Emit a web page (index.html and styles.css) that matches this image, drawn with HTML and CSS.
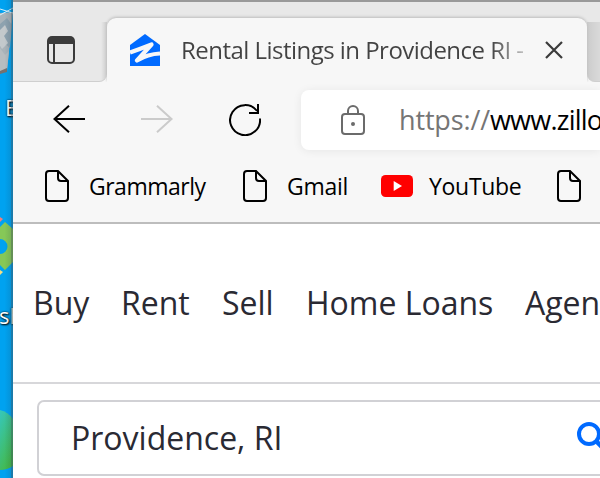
FILE: index.html
```html
<!DOCTYPE html>
<html lang="en">
<head>
<meta charset="utf-8">
<title>Rental Listings in Providence RI</title>
<link rel="stylesheet" href="styles.css">
</head>
<body>
<svg width="0" height="0" class="defs">
  <symbol id="page" viewBox="0 0 24 32"><path d="M4 1H13L23 11V28Q23 31 20 31H4Q1 31 1 28V4Q1 1 4 1ZM13 1V8Q13 11 16 11H23" fill="none" stroke="#000" stroke-width="2"/></symbol>
</svg>
<div class="screen">
  <aside class="desktop">
    <svg class="wallpaper" width="13" height="478" viewBox="0 0 13 478">
      <path d="M0 13L13 12L7 71L0 73Z" fill="#a9b3b9"/>
      <path d="M0 24L7 18L12 25L10 48L4 43L0 47Z" fill="#8da2af"/>
      <path d="M0 30L5 25L8 31L4 36L8 43L2 49L0 46Z" fill="#c3c9cc"/>
      <path d="M0 48L5 55L9 51L7 69L0 72Z" fill="#b7bdc0"/>
      <path d="M0 71L7 68V72L0 74Z" fill="#77716e"/>
      <path d="M0 9L13 13M0 15L13 8" stroke="#d9eff9" stroke-width="1"/>
      <path d="M0 227L5 222L13 229V262L5 270L0 265V254A7.500 7.500 0 0 0 0 239Z" fill="#86c857"/>
      <path d="M0 217L3 219L0 222Z" fill="#f47d7b"/>
      <path d="M0 270L3 272L0 275Z" fill="#f8df83"/>
      <path d="M0 410Q8 412 13 419V466Q7 470 0 470Z" fill="url(#orb)"/>
      <defs><linearGradient id="orb" x2=".5" y2="1"><stop stop-color="#36c7bd"/><stop offset="1" stop-color="#43b94c"/></linearGradient></defs>
    </svg>
    <span class="label label-top">E</span>
    <span class="label label-mid">sh</span>
  </aside>
  <main class="window">
    <header class="tabstrip">
      <div class="strip-cell strip-left"><div class="strip-fill">
        <svg width="28" height="28" viewBox="0 0 28 28"><rect x="1" y="1" width="26" height="26" rx="4" fill="none" stroke="#3b3b3b" stroke-width="2"/><path d="M1 8V4Q1 1 4 1H24Q27 1 27 4V8Z" fill="#3b3b3b"/><path d="M7 8V27" stroke="#3b3b3b" stroke-width="2"/></svg>
      </div></div>
      <div class="tab-cell"><div class="tab">
        <svg class="favicon" width="30" height="32" viewBox="0 0 30 32"><path d="M0 11L15 0L30 11V32H0Z" fill="#006aff"/><path d="M0 18.500Q10 15 21.500 10.500L7 26.500Q18 20 30 19.500" fill="none" stroke="#f7f7f7" stroke-width="4.200" stroke-linejoin="round"/></svg>
        <span class="tab-title">Rental Listings in Providence RI <i>-</i></span>
        <svg class="close" width="18" height="18" viewBox="0 0 18 18"><path d="M1 1L17 17M17 1L1 17" stroke="#3b3b3b" stroke-width="2.200"/></svg>
      </div></div>
      <div class="strip-cell strip-right"><div class="strip-fill"></div></div>
    </header>
    <section class="toolbar">
      <svg class="back" width="32" height="28" viewBox="0 0 32 28"><path d="M32 14H1.500M16 .8L1.500 14L16 27.200" fill="none" stroke="#000" stroke-width="2"/></svg>
      <svg class="forward" width="32" height="28" viewBox="0 0 32 28"><path d="M0 14H30.500M16 .8L30.500 14L16 27.200" fill="none" stroke="#cbcbcb" stroke-width="2"/></svg>
      <svg class="reload" width="32" height="32" viewBox="0 0 32 32"><path d="M31 14.500A15 15 0 1 1 28 7M29 0V9H20" fill="none" stroke="#000" stroke-width="2"/></svg>
      <div class="address">
        <svg width="24" height="30" viewBox="0 0 24 30"><rect x="1" y="9" width="22" height="20" rx="3" fill="none" stroke="#6b6b6b" stroke-width="2"/><path d="M7 9V6A5 5 0 0 1 17 6V9" fill="none" stroke="#6b6b6b" stroke-width="2"/><circle cx="12" cy="19" r="2" fill="#6b6b6b"/></svg>
        <span class="url"><span class="scheme">https://</span><span class="host">www.zillow.com</span></span>
      </div>
    </section>
    <nav class="bookmarks">
      <svg class="b1" width="24" height="32"><use href="#page"/></svg><span class="t1">Grammarly</span>
      <svg class="b2" width="24" height="32"><use href="#page"/></svg><span class="t2">Gmail</span>
      <svg class="b3" width="32" height="22" viewBox="0 0 32 22"><rect width="32" height="22" rx="4.500" fill="#f00"/><path d="M12.700 6L21 11L12.700 16Z" fill="#fff"/></svg><span class="t3">YouTube</span>
      <svg class="b4" width="24" height="32"><use href="#page"/></svg>
    </nav>
    <nav class="site-nav"><span class="n1">Buy</span><span class="n2">Rent</span><span class="n3">Sell</span><span class="n4">Home Loans</span><span class="n5">Agent finder</span></nav>
    <section class="search-row"><div class="search">
      <span>Providence, RI</span>
      <svg width="32" height="32" viewBox="0 0 32 32"><circle cx="12" cy="12" r="10" fill="none" stroke="#006aff" stroke-width="4"/><path d="M19 19L30 30" stroke="#006aff" stroke-width="4.500"/></svg>
    </div></section>
  </main>
</div>
</body>
</html>
```
FILE: styles.css
```css
* { box-sizing: border-box; }
body { margin: 0; font-family: "Open Sans", "Noto Sans", sans-serif; }
svg { display: block; flex: none; }
.defs { position: absolute; }
.screen { display: flex; width: 600px; height: 478px; overflow: hidden; }
.desktop { position: relative; width: 13px; flex: none; background: #00a2f0; overflow: hidden; }
.desktop::after { content: ""; position: absolute; inset: 0; background: linear-gradient(90deg, transparent 35%, rgba(35,55,75,.14) 84%, rgba(60,75,85,.45) 86%); }
.label { position: absolute; color: #fff; font-size: 22px; line-height: 28px; text-shadow: 1px 1px 2px #000, 0 0 2px #000; }
.label-top { left: 5px; top: 93px; }
.label-mid { left: -1px; top: 301px; }
.window { width: 587px; flex: none; overflow: hidden; background: #fff; }
.tabstrip { display: flex; height: 82px; border-top: 2px solid #999; background: #f7f7f7; }
.strip-left { width: 94px; }
.strip-right { width: 13px; }
.strip-fill { height: 80px; display: flex; align-items: center; padding: 16px 0 0 34px; background: #e8e8e8; border-bottom: 1px solid #cfcfcf; }
.strip-left .strip-fill { border-radius: 0 0 8px 0; background: linear-gradient(90deg, transparent 88px, rgba(0,0,0,.12)) 0 20px / 100% 60px no-repeat #e8e8e8; }
.strip-right .strip-fill { border-radius: 0 0 0 8px; background: linear-gradient(270deg, transparent 7px, rgba(0,0,0,.12)) 0 20px / 100% 60px no-repeat #e8e8e8; }
.tab-cell { width: 480px; padding-top: 16px; background: #e8e8e8; }
.tab { height: 64px; display: flex; align-items: center; background: #f7f7f7; border-radius: 9px 9px 0 0; box-shadow: 0 -1px 3px #bbb; clip-path: inset(-5px -3px 0); }
.favicon { margin-left: 23px; }
.tab-title { width: 345px; margin: 0 19px 0 21px; padding-bottom: 2px; font-size: 24px; letter-spacing: -.53px; white-space: nowrap; color: transparent; background: linear-gradient(90deg, #424242 310px, rgba(66,66,66,.2) 348px); -webkit-background-clip: text; background-clip: text; }
.tab-title i { font-style: normal; }
.toolbar { height: 75px; display: flex; align-items: center; background: #f7f7f7; }
.back { margin-left: 40px; margin-top: -1px; }
.forward { margin-left: 56px; margin-top: -1px; }
.reload { margin-left: 56px; }
.address { flex: 1; height: 60px; margin: 1px 0 0 40px; padding-left: 40px; display: flex; align-items: center; border-radius: 8px 0 0 8px; background: #fff; box-shadow: 0 1px 10px rgba(0,0,0,.07); overflow: hidden; }
.url { margin-left: 34px; padding-bottom: 1px; font-size: 27px; letter-spacing: -.75px; white-space: nowrap; }
.scheme { color: #757575; letter-spacing: -.15px; }
.bookmarks { height: 67px; padding-bottom: 7px; display: flex; align-items: center; background: #f7f7f7; border-bottom: 2px solid #bdbdbd; font-size: 23px; color: #000; }
.bookmarks span { white-space: nowrap; padding-bottom: 1px; flex: none; letter-spacing: -.3px; }
.b1 { margin-left: 32px; }
.bookmarks .t1 { width: 118px; margin-left: 20px; letter-spacing: -.5px; }
.b2 { margin-left: 36px; }
.t2 { width: 62px; margin-left: 20px; }
.b3 { margin-left: 32px; }
.t3 { width: 92px; margin-left: 16px; }
.b4 { margin-left: 36px; }
.site-nav { height: 160px; padding: 0 0 2px 20px; display: flex; align-items: center; border-bottom: 2px solid #d7d7da; font-size: 32px; color: #2a2a33; white-space: nowrap; }
.site-nav span { flex: none; }
.n1 { width: 88px; }
.n2 { width: 101px; }
.n3 { width: 84px; }
.n4 { width: 219px; }
.search-row { padding: 16px 0 0 24px; }
.search { width: 640px; height: 76px; padding-left: 30px; display: flex; align-items: center; border: 2px solid #d1d1d5; border-radius: 7px; font-size: 32px; color: #2a2a33; }
.search span { width: 508px; padding: 0 0 2px 2px; }
```
